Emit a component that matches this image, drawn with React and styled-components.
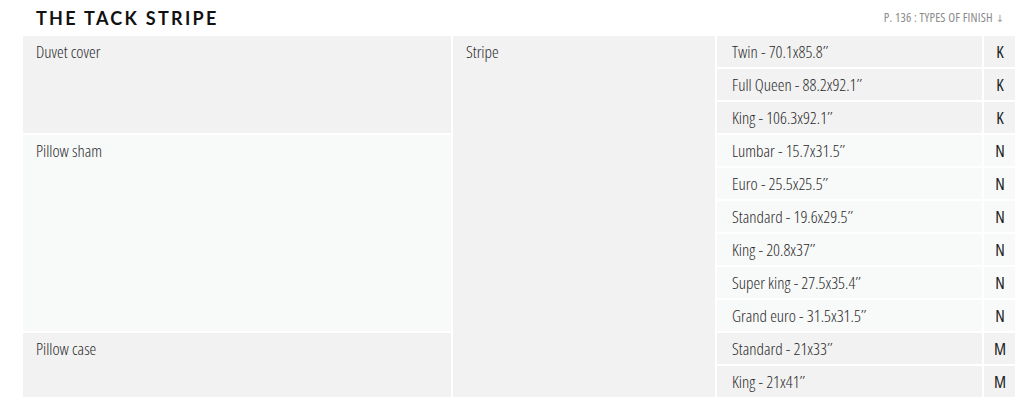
import React from "react";
import styled, { createGlobalStyle } from "styled-components";

const GlobalStyle = createGlobalStyle`
    html, body {
        margin: 0;
        padding: 0;
        background: #ffffff;
    }
    body {
        font-family: "Open Sans", "DejaVu Sans Condensed", sans-serif;
        font-stretch: 75%;
        color: #2b2b2b;
    }
`;

const groups = [
    {
        name: "Duvet cover",
        tone: "dark",
        sizes: [
            ["Twin - 70.1x85.8\u2033", "K"],
            ["Full Queen - 88.2x92.1\u2033", "K"],
            ["King - 106.3x92.1\u2033", "K"],
        ],
    },
    {
        name: "Pillow sham",
        tone: "light",
        sizes: [
            ["Lumbar - 15.7x31.5\u2033", "N"],
            ["Euro - 25.5x25.5\u2033", "N"],
            ["Standard - 19.6x29.5\u2033", "N"],
            ["King - 20.8x37\u2033", "N"],
            ["Super king - 27.5x35.4\u2033", "N"],
            ["Grand euro - 31.5x31.5\u2033", "N"],
        ],
    },
    {
        name: "Pillow case",
        tone: "dark",
        sizes: [
            ["Standard - 21x33\u2033", "M"],
            ["King - 21x41\u2033", "M"],
        ],
    },
];

export default function App() {
    const total = groups.reduce((n, g) => n + g.sizes.length, 0);
    return (
        <Page>
            <GlobalStyle />
            <Header>
                <Title>THE TACK STRIPE</Title>
                <PageRef>P. 136 : TYPES OF FINISH <Arrow>&#8595;</Arrow></PageRef>
            </Header>
            <Table>
                <colgroup>
                    <col style={{ width: 428 }} />
                    <col style={{ width: 262 }} />
                    <col style={{ width: 265 }} />
                    <col style={{ width: 31 }} />
                </colgroup>
                <tbody>
                    {groups.map((g, gi) =>
                        g.sizes.map(([size, code], i) => (
                            <tr key={g.name + size}>
                                {i === 0 && (
                                    <Product rowSpan={g.sizes.length} $tone={g.tone}>
                                        {g.name}
                                    </Product>
                                )}
                                {gi === 0 && i === 0 && (
                                    <Product rowSpan={total} $tone="dark">
                                        Stripe
                                    </Product>
                                )}
                                <Size $tone={g.tone}>{size}</Size>
                                <Code $tone={g.tone}>{code}</Code>
                            </tr>
                        ))
                    )}
                </tbody>
            </Table>
        </Page>
    );
}

const Page = styled.div`
    width: 1035px;
    height: 410px;
    padding: 0 19px 0 21px;
    box-sizing: border-box;
    overflow: hidden;
`;

const Header = styled.div`
    display: flex;
    align-items: center;
    justify-content: space-between;
    height: 34px;
    padding: 0 12px 0 15px;
`;

const Title = styled.h1`
    margin: 0;
    font-family: "Lato", "DejaVu Sans", sans-serif;
    font-stretch: normal;
    font-weight: 700;
    font-size: 18px;
    letter-spacing: 2.3px;
    color: #111111;
    padding-top: 1px;
`;

const PageRef = styled.div`
    font-size: 12.5px;
    font-stretch: 80%;
    color: #8a8a8a;
    letter-spacing: 0.2px;
`;

const Arrow = styled.span`
    font-family: "DejaVu Sans", sans-serif;
    font-stretch: normal;
    font-size: 10px;
    color: #999999;
`;

const Table = styled.table`
    width: 992px;
    border-collapse: separate;
    border-spacing: 2px;
    table-layout: fixed;
`;

const Cell = styled.td`
    background: ${(p) => (p.$tone === "light" ? "#f8f9f9" : "#f2f2f2")};
    font-size: 17px;
    font-weight: 300;
    color: #2a2a2a;
    height: 31px;
    padding: 0 13px;
    box-sizing: border-box;
`;

const Product = styled(Cell)`
    vertical-align: top;
    padding-top: 4px;
`;

const Size = styled(Cell)`
    vertical-align: middle;
    padding-left: 15px;
`;

const Code = styled(Cell)`
    vertical-align: middle;
    text-align: center;
    padding: 0 0 0 1px;
    font-weight: 400;
    color: #222222;
`;
